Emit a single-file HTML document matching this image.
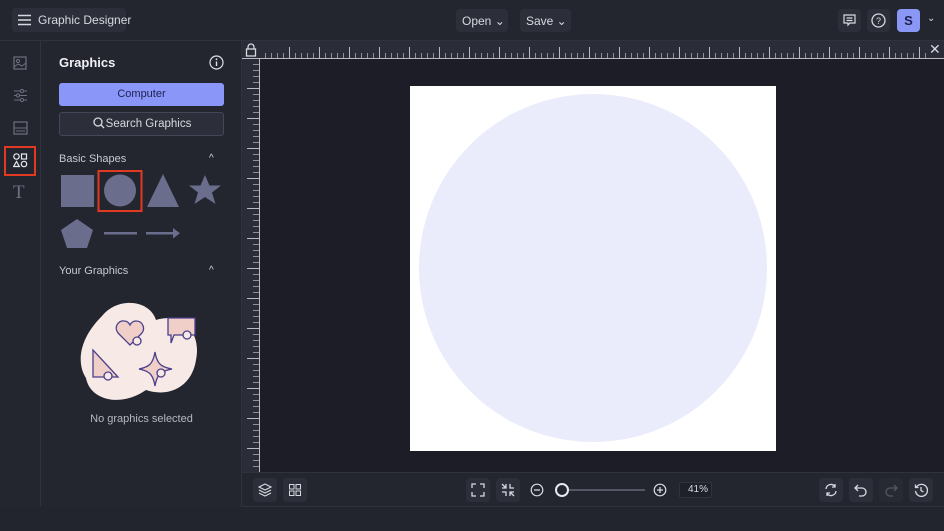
<!DOCTYPE html>
<html><head><style>
*{margin:0;padding:0;box-sizing:border-box}
body{width:944px;height:531px;background:#22242e;font-family:"Liberation Sans",sans-serif;color:#d8d9e0;position:relative;overflow:hidden}
.abs{position:absolute}
.btn{position:absolute;background:#2c2e39;border-radius:4px}
</style></head><body>
<div class="abs" style="left:0;top:0;width:944px;height:41px;background:#23252f;border-bottom:1px solid #30323d"></div>
<div class="btn" style="left:12px;top:8px;width:114px;height:24px"></div>
<svg class="abs" style="left:18px;top:14px" width="13" height="12"><path d="M0 1.5H13M0 6H13M0 10.5H13" stroke="#d8d9e0" stroke-width="1.4"/></svg>
<div class="abs" style="left:38px;top:13px;font-size:12px">Graphic Designer</div>
<div class="btn" style="left:456px;top:9px;width:52px;height:23px"></div>
<div class="abs" style="left:462px;top:14px;font-size:12px">Open ⌄</div>
<div class="btn" style="left:520px;top:9px;width:51px;height:23px"></div>
<div class="abs" style="left:526px;top:14px;font-size:12px">Save ⌄</div>
<div class="btn" style="left:838px;top:9px;width:23px;height:23px"></div>
<svg class="abs" style="left:843px;top:14px" width="13" height="13"><path d="M1 1H12V9H7L5 11V9H1Z M3.5 4H9.5M3.5 6.5H9.5" fill="none" stroke="#d8d9e0" stroke-width="1.2"/></svg>
<div class="btn" style="left:867px;top:9px;width:23px;height:23px"></div>
<svg class="abs" style="left:871px;top:13px" width="15" height="15"><circle cx="7.5" cy="7.5" r="6.5" fill="none" stroke="#d8d9e0" stroke-width="1.3"/><text x="7.5" y="11" font-size="9" text-anchor="middle" fill="#d8d9e0" font-family="Liberation Sans">?</text></svg>
<div class="abs" style="left:897px;top:9px;width:23px;height:23px;background:#8a97f5;border-radius:4px;color:#1d2050;font-weight:bold;font-size:13px;text-align:center;line-height:23px">S</div>
<div class="abs" style="left:927px;top:13px;font-size:10px">⌄</div>
<div class="abs" style="left:0;top:41px;width:41px;height:466px;background:#23252f;border-right:1px solid #30323d"></div>
<svg class="abs" style="left:13px;top:56px" width="14" height="14"><rect x="1" y="1" width="12" height="12" fill="none" stroke="#6e7080" stroke-width="1.2"/><circle cx="5" cy="5" r="1.5" fill="none" stroke="#6e7080"/><path d="M1 11L5 8L9 10L13 7" fill="none" stroke="#6e7080"/></svg>
<svg class="abs" style="left:13px;top:88px" width="15" height="15"><path d="M1 3H14M1 7.5H14M1 12H14" stroke="#6e7080" stroke-width="1.1"/><circle cx="9" cy="3" r="1.6" fill="#23252f" stroke="#6e7080"/><circle cx="5" cy="7.5" r="1.6" fill="#23252f" stroke="#6e7080"/><circle cx="9" cy="12" r="1.6" fill="#23252f" stroke="#6e7080"/></svg>
<svg class="abs" style="left:13px;top:121px" width="15" height="14"><rect x="1" y="1" width="13" height="12" fill="none" stroke="#6e7080" stroke-width="1.2"/><path d="M1 7H14M3 10H12" stroke="#6e7080"/></svg>
<div class="abs" style="left:4px;top:146px;width:32px;height:30px;border:2px solid #e23a22"></div>
<svg class="abs" style="left:13px;top:153px" width="15" height="15"><circle cx="3.5" cy="3.5" r="2.7" fill="none" stroke="#e8e9ef" stroke-width="1.2"/><rect x="8.5" y="1" width="5" height="5" fill="none" stroke="#e8e9ef" stroke-width="1.2"/><path d="M3.5 8.5L6.3 13.5H0.7Z" fill="none" stroke="#e8e9ef" stroke-width="1.2"/><circle cx="11" cy="11" r="2.7" fill="none" stroke="#e8e9ef" stroke-width="1.2"/></svg>
<div class="abs" style="left:13px;top:182px;font-size:19px;color:#6e7080;font-family:'Liberation Serif',serif">T</div>
<div class="abs" style="left:41px;top:41px;width:201px;height:466px;background:#23252f;border-right:1px solid #30323d"></div>
<div class="abs" style="left:59px;top:55px;font-size:13px;font-weight:bold;color:#f0f0f5">Graphics</div>
<svg class="abs" style="left:209px;top:55px" width="15" height="15"><circle cx="7.5" cy="7.5" r="6.5" fill="none" stroke="#e0e1e8" stroke-width="1.2"/><path d="M7.5 6.5V11" stroke="#e0e1e8" stroke-width="1.4"/><circle cx="7.5" cy="4.3" r="0.9" fill="#e0e1e8"/></svg>
<div class="abs" style="left:59px;top:83px;width:165px;height:23px;background:#8a97f8;border-radius:3px;color:#1e2150;font-size:11px;text-align:center;line-height:23px">Computer</div>
<div class="abs" style="left:59px;top:112px;width:165px;height:24px;background:#2c2e39;border:1px solid #44465a;border-radius:3px;font-size:11.5px;text-align:center;line-height:22px;padding-left:14px">Search Graphics</div>
<svg class="abs" style="left:93px;top:117px" width="12" height="12"><circle cx="5" cy="5" r="4" fill="none" stroke="#d8d9e0" stroke-width="1.3"/><path d="M8 8L11 11" stroke="#d8d9e0" stroke-width="1.3"/></svg>
<div class="abs" style="left:59px;top:153px;font-size:11px;color:#c8c9d2">Basic Shapes</div>
<div class="abs" style="left:209px;top:153px;font-size:10px">^</div>
<svg class="abs" style="left:55px;top:168px" width="180" height="85">
<rect x="6" y="7" width="33" height="32" fill="#6b6d8c"/>
<circle cx="65" cy="22.5" r="16" fill="#6b6d8c"/>
<rect x="43.5" y="3" width="43" height="40" fill="none" stroke="#e23a22" stroke-width="2"/>
<path d="M108 6L124 39H92Z" fill="#6b6d8c"/>
<path d="M150 7L154.5 17.5H166L157 24.5L160.5 36L150 29L139.5 36L143 24.5L134 17.5H145.5Z" fill="#6b6d8c"/>
<path d="M22 51L38 62L32 80H12L6 62Z" fill="#6b6d8c"/>
<rect x="49" y="64" width="33" height="2.5" fill="#6b6d8c"/>
<path d="M91 64H118V60L125 65.2L118 70.5V66.5H91Z" fill="#6b6d8c"/>
</svg>
<div class="abs" style="left:59px;top:265px;font-size:11px;color:#c8c9d2">Your Graphics</div>
<div class="abs" style="left:209px;top:265px;font-size:10px">^</div>
<svg class="abs" style="left:60px;top:290px" width="160" height="120">
<path d="M42 26C58 6 90 10 96 30C120 22 142 40 136 70C132 96 110 108 86 100C60 118 30 110 26 88C18 76 16 52 42 26Z" fill="#f7e9e6"/>
<g fill="#efcfc8" stroke="#4a3f8a" stroke-width="1.3">
<path d="M70 55L59 44C53 38 58 30 64 31C67 31 69 33 70 35C71 33 73 31 76 31C83 31 86 39 81 44Z"/>
<circle cx="77" cy="51" r="4" fill="#f7e9e6"/>
<path d="M108 28H135V45H114L111 53V45H108Z"/>
<circle cx="127" cy="45" r="4" fill="#f7e9e6"/>
<path d="M33 60V87H58Z"/>
<circle cx="48" cy="86" r="4" fill="#f7e9e6"/>
<path d="M95 62C97 74 101 77 112 79C101 81 97 84 95 96C93 84 89 81 79 79C89 77 93 74 95 62Z"/>
<circle cx="101" cy="83" r="4" fill="#f7e9e6"/>
</g></svg>
<div class="abs" style="left:41px;top:413px;width:201px;text-align:center;font-size:11px;color:#b5b7c2">No graphics selected</div>
<div class="abs" style="left:242px;top:41px;width:702px;height:431px;background:#1c1d26"></div>
<div class="abs" style="left:242px;top:41px;width:702px;height:18px;background:#2a2c37"></div>
<div class="abs" style="left:260px;top:53px;width:668px;height:5px;background:repeating-linear-gradient(90deg,transparent 0 5px,#8f909b 5px 6px)"></div>
<div class="abs" style="left:260px;top:47px;width:668px;height:11px;background:repeating-linear-gradient(90deg,transparent 0 29px,#b8b9c2 29px 30px)"></div>
<div class="abs" style="left:242px;top:58px;width:702px;height:1px;background:#b8b9c2"></div>
<div class="abs" style="left:242px;top:59px;width:18px;height:413px;background:#2a2c37"></div>
<div class="abs" style="left:253px;top:59px;width:6px;height:413px;background:repeating-linear-gradient(180deg,transparent 0 5px,#8f909b 5px 6px)"></div>
<div class="abs" style="left:247px;top:59px;width:12px;height:413px;background:repeating-linear-gradient(180deg,transparent 0 29px,#b8b9c2 29px 30px)"></div>
<div class="abs" style="left:259px;top:59px;width:1px;height:413px;background:#b8b9c2"></div>
<svg class="abs" style="left:245px;top:43px" width="12" height="14"><path d="M3 6V4A3 3 0 0 1 9 4V6" fill="none" stroke="#d8d9e0" stroke-width="1.3"/><rect x="1.5" y="6" width="9" height="7" fill="none" stroke="#d8d9e0" stroke-width="1.3"/></svg>
<div class="abs" style="left:929px;top:41px;font-size:14px;color:#d8d9e0">✕</div>
<div class="abs" style="left:410px;top:86px;width:366px;height:365px;background:#fff"></div>
<div class="abs" style="left:419px;top:94px;width:348px;height:348px;border-radius:50%;background:#eaecfc"></div>
<div class="abs" style="left:242px;top:472px;width:702px;height:35px;background:#23252f;border-top:1px solid #30323d;border-bottom:1px solid #30323d"></div>
<div class="btn" style="left:253px;top:478px;width:24px;height:24px"></div>
<svg class="abs" style="left:258px;top:483px" width="14" height="14"><path d="M7 1L13 4L7 7L1 4Z M1 7L7 10L13 7M1 10L7 13L13 10" fill="none" stroke="#d8d9e0" stroke-width="1.1"/></svg>
<div class="btn" style="left:283px;top:478px;width:24px;height:24px"></div>
<svg class="abs" style="left:289px;top:484px" width="12" height="12"><g fill="none" stroke="#d8d9e0"><rect x="0.5" y="0.5" width="4.5" height="4.5"/><rect x="7" y="0.5" width="4.5" height="4.5"/><rect x="0.5" y="7" width="4.5" height="4.5"/><rect x="7" y="7" width="4.5" height="4.5"/></g></svg>
<div class="btn" style="left:466px;top:478px;width:24px;height:24px"></div>
<svg class="abs" style="left:471px;top:483px" width="14" height="14"><path d="M1 5V1H5M9 1H13V5M13 9V13H9M5 13H1V9" fill="none" stroke="#d8d9e0" stroke-width="1.3"/></svg>
<div class="btn" style="left:496px;top:478px;width:24px;height:24px"></div>
<svg class="abs" style="left:501px;top:483px" width="14" height="14"><path d="M1 5H5V1M9 1V5H13M13 9H9V13M5 13V9H1M5 5L1 1M9 9L13 13" fill="none" stroke="#d8d9e0" stroke-width="1.3"/></svg>
<svg class="abs" style="left:530px;top:483px" width="14" height="14"><circle cx="7" cy="7" r="5.8" fill="none" stroke="#d8d9e0" stroke-width="1.2"/><path d="M4 7H10" stroke="#d8d9e0" stroke-width="1.3"/></svg>
<div class="abs" style="left:555px;top:489px;width:90px;height:2px;background:#555766"></div>
<div class="abs" style="left:555px;top:483px;width:14px;height:14px;border-radius:50%;border:2px solid #e8e9ef;background:#23252f"></div>
<svg class="abs" style="left:653px;top:483px" width="14" height="14"><circle cx="7" cy="7" r="5.8" fill="none" stroke="#d8d9e0" stroke-width="1.2"/><path d="M4 7H10M7 4V10" stroke="#d8d9e0" stroke-width="1.3"/></svg>
<div class="abs" style="left:679px;top:482px;width:33px;height:16px;background:#1f212a;border:1px solid #30323d;border-radius:2px;font-size:10px;text-align:right;padding-right:3px;line-height:14px">41%</div>
<div class="btn" style="left:819px;top:478px;width:24px;height:24px"></div>
<svg class="abs" style="left:824px;top:483px" width="14" height="14"><path d="M2 6A5 5 0 0 1 11 3.5M12 8A5 5 0 0 1 3 10.5M11 1V4H8M3 13V10H6" fill="none" stroke="#d8d9e0" stroke-width="1.3"/></svg>
<div class="btn" style="left:849px;top:478px;width:24px;height:24px"></div>
<svg class="abs" style="left:854px;top:483px" width="14" height="14"><path d="M4 2L1 5L4 8M1 5H8A4 4 0 0 1 8 13H5" fill="none" stroke="#d8d9e0" stroke-width="1.3"/></svg>
<div class="btn" style="left:879px;top:478px;width:24px;height:24px;background:#272933"></div>
<svg class="abs" style="left:884px;top:483px" width="14" height="14"><path d="M10 2L13 5L10 8M13 5H6A4 4 0 0 0 6 13H9" fill="none" stroke="#555766" stroke-width="1.3"/></svg>
<div class="btn" style="left:909px;top:478px;width:24px;height:24px"></div>
<svg class="abs" style="left:914px;top:483px" width="14" height="14"><path d="M2.5 4A6 6 0 1 1 1.5 8M1.5 1.5V4.5H4.5M7 4V7.5L9.5 9" fill="none" stroke="#d8d9e0" stroke-width="1.3"/></svg>
</body></html>
